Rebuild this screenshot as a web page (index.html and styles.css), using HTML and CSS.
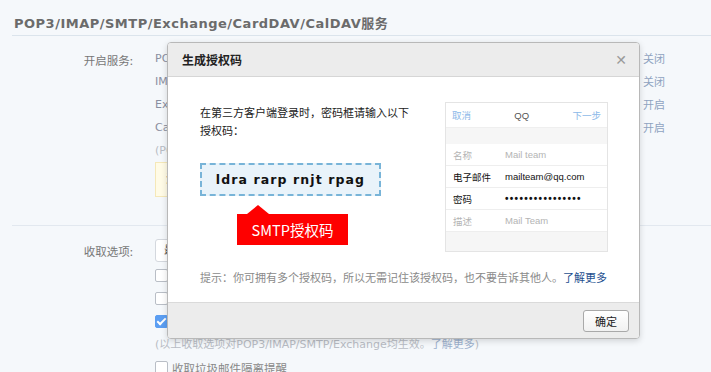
FILE: index.html
```html
<!DOCTYPE html>
<html lang="zh-CN">
<head>
    <meta charset="UTF-8">
    <meta name="viewport" content="width=device-width, initial-scale=1.0">
    <title>生成授权码</title>
    <link rel="stylesheet" href="styles.css">
</head>
<body>
    <div class="page">
        <h2 class="section-title">POP3/IMAP/SMTP/Exchange/CardDAV/CalDAV服务</h2>

        <div class="form-row">
            <div class="label">开启服务:</div>
            <div class="field">
                <div class="service"><span>POP3/SMTP服务</span><span class="state">关闭</span></div>
                <div class="service"><span>IMAP/SMTP服务</span><span class="state">关闭</span></div>
                <div class="service"><span>Exchange服务</span><span class="state">开启</span></div>
                <div class="service"><span>CardDAV/CalDAV服务</span><span class="state">开启</span></div>
                <div class="note">(POP3/IMAP/SMTP/CardDAV/CalDAV服务均支持SSL连接)</div>
                <div class="tip-box">温馨提示：登录第三方客户端时，密码框请输入“授权码”进行验证。</div>
            </div>
        </div>

        <div class="divider"></div>

        <div class="form-row">
            <div class="label label-select">收取选项:</div>
            <div class="field">
                <div class="select">最近30天</div>
                <label class="check"><span class="box"></span>收取“我的文件夹”</label>
                <label class="check"><span class="box"></span>收取“QQ邮件订阅”</label>
                <label class="check"><span class="box checked"></span>SMTP发信后保存到服务器</label>
                <div class="note">(以上收取选项对POP3/IMAP/SMTP/Exchange均生效。<span class="note-link">了解更多</span>)</div>
                <label class="check"><span class="box"></span>收取垃圾邮件隔离提醒</label>
            </div>
        </div>
    </div>

    <div class="dialog">
        <div class="dialog-head">
            <span class="dialog-title">生成授权码</span>
            <span class="dialog-close">&#x2715;</span>
        </div>
        <div class="dialog-body">
            <div class="body-main">
                <div class="code-side">
                    <p class="intro">在第三方客户端登录时，密码框请输入以下<br>授权码：</p>
                    <div class="code">ldra rarp rnjt rpag</div>
                    <div class="code-tag">SMTP授权码</div>
                </div>
                <div class="phone">
                    <div class="phone-nav">
                        <span class="nav-link">取消</span>
                        <span class="nav-title">QQ</span>
                        <span class="nav-link">下一步</span>
                    </div>
                    <div class="phone-gap"></div>
                    <div class="phone-row dim"><span class="key">名称</span><span>Mail team</span></div>
                    <div class="phone-row"><span class="key">电子邮件</span><span>mailteam@qq.com</span></div>
                    <div class="phone-row"><span class="key">密码</span><span class="dots">&#8226;&#8226;&#8226;&#8226;&#8226;&#8226;&#8226;&#8226;&#8226;&#8226;&#8226;&#8226;&#8226;&#8226;&#8226;&#8226;</span></div>
                    <div class="phone-row dim"><span class="key">描述</span><span>Mail Team</span></div>
                    <div class="phone-gap bottom"></div>
                </div>
            </div>
            <p class="hint">提示：你可拥有多个授权码，所以无需记住该授权码，也不要告诉其他人。<a class="more">了解更多</a></p>
        </div>
        <div class="dialog-foot">
            <button class="ok">确定</button>
        </div>
    </div>
</body>
</html>
```

FILE: styles.css
```css
body {
    margin: 0;
    background-color: #f5f8fb;
    font-family: "DejaVu Sans", "Noto Sans CJK SC", sans-serif;
    font-size: 11px;
    color: #888;
    overflow: hidden;
}

.page {
    padding: 12px 0 0 12px;
}

.section-title {
    margin: 0;
    padding: 2px 0 0 2px;
    height: 21px;
    line-height: 20px;
    font-size: 13px;
    font-weight: bold;
    letter-spacing: 0.5px;
    color: #6b6b6b;
    border-bottom: 1px solid #dbe4ec;
}

.form-row {
    display: flex;
}
.form-row .label {
    width: 121px;
    text-align: right;
    font-family: "Noto Sans CJK SC", sans-serif;
    font-size: 11.5px;
    color: #777;
    line-height: 23px;
    padding-top: 13px;
}
.form-row .field {
    margin-left: 22px;
    flex: 1;
    padding-top: 11px;
}

.service {
    display: flex;
    justify-content: space-between;
    width: 510px;
    height: 23px;
    line-height: 23px;
    color: #8a8fa0;
}
.service .state {
    font-family: "Noto Sans CJK SC", sans-serif;
    color: #8fa3c0;
}
.note {
    height: 23px;
    line-height: 23px;
    color: #b8bcc4;
}
.note-link {
    color: #9db1cd;
}
.tip-box {
    width: 400px;
    height: 33px;
    line-height: 33px;
    padding-left: 10px;
    background-color: #fffbe6;
    border: 1px solid #f5e8b8;
    color: #8a7a50;
}

.divider {
    margin-top: 28px;
    border-top: 1px solid #e2e8ef;
}

.form-row .label-select {
    padding-top: 14px;
}
.select {
    width: 90px;
    height: 21px;
    line-height: 21px;
    padding-left: 8px;
    margin-top: 2px;
    background-color: #fff;
    border: 1px solid #d4d8de;
    border-radius: 3px;
    color: #555;
}
.check {
    display: flex;
    align-items: center;
    height: 23px;
    color: #888;
    font-family: "Noto Sans CJK SC", sans-serif;
    font-size: 11.5px;
}
.check .box {
    width: 11px;
    height: 11px;
    border: 1px solid #b9bec6;
    border-radius: 2px;
    background-color: #fff;
    margin-right: 4px;
}
.check .box.checked {
    background-color: #5b9ef2;
    border-color: #5b9ef2;
    position: relative;
}
.check .box.checked::after {
    content: "";
    position: absolute;
    left: 3px;
    top: 0;
    width: 3px;
    height: 7px;
    border: solid #fff;
    border-width: 0 2px 2px 0;
    transform: rotate(45deg);
}
.select + .check {
    margin-top: 2px;
}

/* Dialog */
.dialog {
    position: absolute;
    left: 167px;
    top: 42px;
    width: 471px;
    background-color: #fff;
    border: 1px solid #b8b8b8;
    border-radius: 4px;
    box-shadow: 0 2px 6px rgba(0, 0, 0, 0.15);
    overflow: hidden;
    font-family: "Noto Sans CJK SC", sans-serif;
}
.dialog-head {
    display: flex;
    justify-content: space-between;
    align-items: center;
    height: 33px;
    padding: 0 12px 0 14px;
    background-color: #ececec;
    border-bottom: 1px solid #d6d6d6;
}
.dialog-title {
    font-size: 12px;
    font-weight: bold;
    color: #222;
}
.dialog-close {
    font-family: "DejaVu Sans", sans-serif;
    font-size: 14px;
    color: #9a9a9a;
}

.dialog-body {
    height: 225px;
    padding: 25px 0 0 32px;
    box-sizing: border-box;
}
.body-main {
    display: flex;
}
.code-side {
    width: 245px;
}
.intro {
    margin: 0;
    font-size: 11px;
    line-height: 18px;
    color: #222;
    padding-top: 1px;
}
.code {
    margin-top: 24px;
    width: 177px;
    height: 29px;
    line-height: 29px;
    text-align: center;
    background-color: #e9f3fa;
    border: 2px dashed #78b4d8;
    font-family: "DejaVu Sans", sans-serif;
    font-weight: bold;
    font-size: 12.5px;
    letter-spacing: 1.1px;
    color: #111;
}
.code-tag {
    position: relative;
    margin: 18px 0 0 37px;
    width: 111px;
    height: 31px;
    line-height: 31px;
    text-align: center;
    background-color: #fe0000;
    color: #fff;
    font-size: 14.5px;
}
.code-tag::before {
    content: "";
    position: absolute;
    left: 10px;
    top: -9px;
    border-left: 11px solid transparent;
    border-right: 11px solid transparent;
    border-bottom: 9px solid #fe0000;
}

.phone {
    width: 161px;
    border: 1px solid #e4e4e4;
    background-color: #fff;
    font-family: "Liberation Sans", "Noto Sans CJK SC", sans-serif;
    font-size: 9.5px;
}
.phone-nav {
    display: flex;
    justify-content: space-between;
    align-items: center;
    height: 24px;
    padding: 0 6px;
    border-bottom: 1px solid #efefef;
}
.nav-link {
    color: #8cb8e8;
}
.nav-title {
    color: #555;
}
.phone-gap {
    height: 16px;
    background-color: #f6f6f6;
}
.phone-gap.bottom {
    height: 19px;
}
.phone-row {
    display: flex;
    align-items: center;
    height: 21px;
    padding-left: 7px;
    border-bottom: 1px solid #eeeeee;
    color: #111;
}
.phone-row.dim {
    color: #b4b4b4;
}
.phone-row .key {
    width: 52px;
}
.phone-row .dots {
    font-size: 10px;
    font-weight: bold;
    letter-spacing: 1.3px;
}

.hint {
    margin: 17px 0 0 0;
    font-size: 11px;
    color: #8a8a8a;
}
.hint .more {
    color: #1e4f8f;
}

.dialog-foot {
    display: flex;
    justify-content: flex-end;
    align-items: center;
    height: 35px;
    padding-right: 10px;
    background-color: #ececec;
    border-top: 1px solid #dadada;
}
.ok {
    width: 46px;
    height: 22px;
    margin-top: 1px;
    background: linear-gradient(#ffffff, #f1f1f1);
    border: 1px solid #a9a9a9;
    border-radius: 3px;
    font-family: "Noto Sans CJK SC", sans-serif;
    font-size: 11px;
    color: #222;
    padding: 0;
}
```
